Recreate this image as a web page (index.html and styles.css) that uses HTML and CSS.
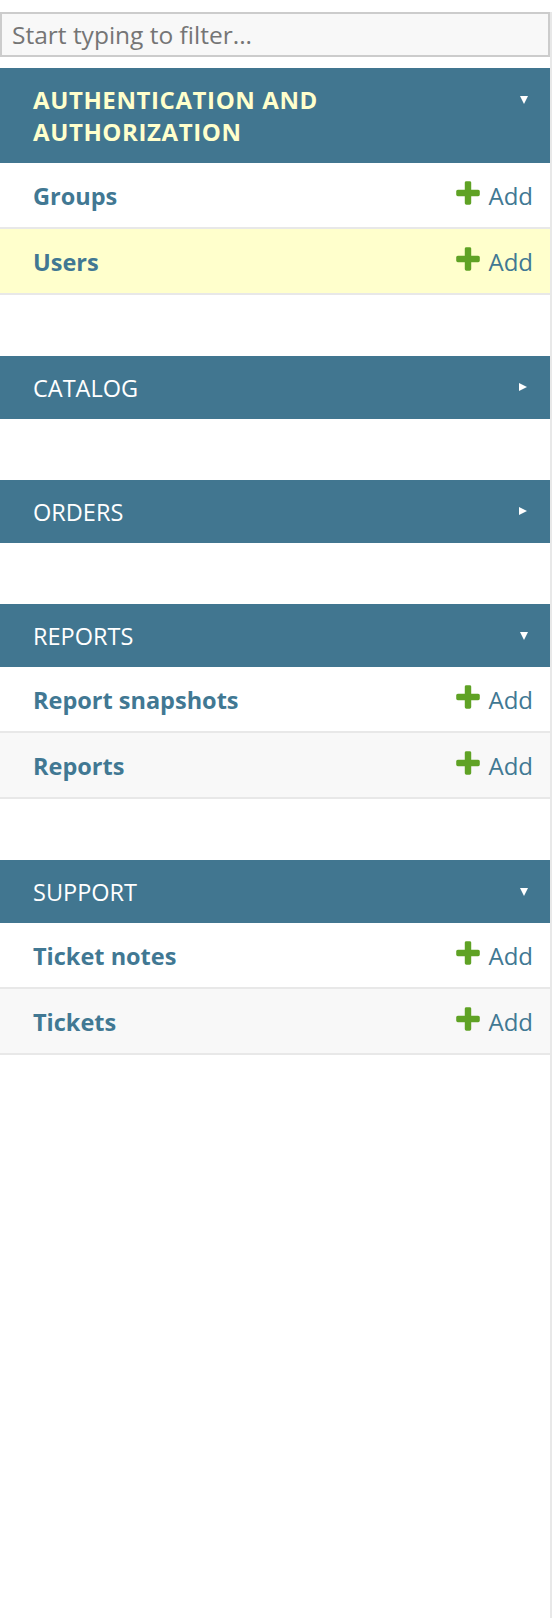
FILE: index.html
```html
<!DOCTYPE html>
<html lang="en">
<head>
    <meta charset="UTF-8">
    <meta name="viewport" content="width=device-width, initial-scale=1.0">
    <title>Site administration</title>
    <link rel="stylesheet" href="styles.css">
</head>
<body>
    <nav class="sidebar" id="nav-sidebar">
        <input type="search" class="nav-filter" placeholder="Start typing to filter...">

        <!-- Auth app (current) -->
        <div class="module current-app">
            <div class="caption">
                <a href="#" class="section">Authentication and Authorization</a>
                <span class="toggle open"></span>
            </div>
            <div class="model-row">
                <a href="#" class="model-link">Groups</a>
                <a href="#" class="addlink">Add</a>
            </div>
            <div class="model-row current-model">
                <a href="#" class="model-link">Users</a>
                <a href="#" class="addlink">Add</a>
            </div>
        </div>

        <div class="module">
            <div class="caption">
                <a href="#" class="section">Catalog</a>
                <span class="toggle closed"></span>
            </div>
        </div>

        <div class="module">
            <div class="caption">
                <a href="#" class="section">Orders</a>
                <span class="toggle closed"></span>
            </div>
        </div>

        <div class="module">
            <div class="caption">
                <a href="#" class="section">Reports</a>
                <span class="toggle open"></span>
            </div>
            <div class="model-row">
                <a href="#" class="model-link">Report snapshots</a>
                <a href="#" class="addlink">Add</a>
            </div>
            <div class="model-row">
                <a href="#" class="model-link">Reports</a>
                <a href="#" class="addlink">Add</a>
            </div>
        </div>

        <div class="module">
            <div class="caption">
                <a href="#" class="section">Support</a>
                <span class="toggle open"></span>
            </div>
            <div class="model-row">
                <a href="#" class="model-link">Ticket notes</a>
                <a href="#" class="addlink">Add</a>
            </div>
            <div class="model-row">
                <a href="#" class="model-link">Tickets</a>
                <a href="#" class="addlink">Add</a>
            </div>
        </div>
    </nav>
</body>
</html>
```

FILE: styles.css
```css
body {
    margin: 0;
    padding: 0;
    font-family: "Open Sans", "Noto Sans", sans-serif;
    background: #fff;
    color: #333;
}
a {
    text-decoration: none;
}
.sidebar {
    width: 550px;
    min-height: 100vh;
    border-right: 2px solid #e8e8e8;
    box-sizing: content-box;
}
.nav-filter {
    display: block;
    width: 100%;
    height: 45px;
    box-sizing: border-box;
    margin: 12px 0 11px;
    padding: 0 10px;
    border: 2px solid #ccc;
    background-color: #f8f8f8;
    font-family: inherit;
    font-size: 24.5px;
    color: #333;
    outline: none;
}
.nav-filter::placeholder {
    color: #757575;
}
.module {
    margin-bottom: 61px;
}
.caption {
    display: flex;
    justify-content: space-between;
    align-items: flex-start;
    padding: 16px 22px 15px 33px;
    background: #417690;
    line-height: 32px;
}
.caption .section {
    color: #fff;
    font-size: 23.5px;
    text-transform: uppercase;
    max-width: 330px;
}
.current-app .caption .section {
    color: #ffc;
    font-weight: bold;
    font-size: 24px;
    letter-spacing: 0.6px;
}
.toggle {
    flex-shrink: 0;
    margin-top: 12px;
    width: 0;
    height: 0;
}
.toggle.open {
    border-left: 4.5px solid transparent;
    border-right: 4.5px solid transparent;
    border-top: 8px solid #fff;
}
.toggle.closed {
    margin-top: 11px;
    margin-right: 1px;
    border-top: 4.5px solid transparent;
    border-bottom: 4.5px solid transparent;
    border-left: 8px solid #fff;
}
.model-row {
    display: flex;
    justify-content: space-between;
    align-items: flex-start;
    padding: 17px 17px 15px 33px;
    line-height: 32px;
    border-bottom: 2px solid #e8e8e8;
    background: #fff;
}
.model-row:nth-child(odd) {
    background: #f8f8f8;
}
.model-row.current-model {
    background: #ffc;
}
.model-link {
    color: #417893;
    font-size: 23.5px;
    font-weight: bold;
}
.addlink {
    padding-left: 32px;
    font-size: 24px;
    color: #417893;
    background: url("data:image/svg+xml;utf8,<svg xmlns='http://www.w3.org/2000/svg' width='30' height='30' viewBox='0 0 1792 1792'><path fill='%235fa225' d='M1600 796v192q0 40-28 68t-68 28h-416v416q0 40-28 68t-68 28h-192q-40 0-68-28t-28-68v-416h-416q-40 0-68-28t-28-68v-192q0-40 28-68t68-28h416v-416q0-40 28-68t68-28h192q40 0 68 28t28 68v416h416q40 0 68 28t28 68z'/></svg>") -3px -2px no-repeat;
}
```
